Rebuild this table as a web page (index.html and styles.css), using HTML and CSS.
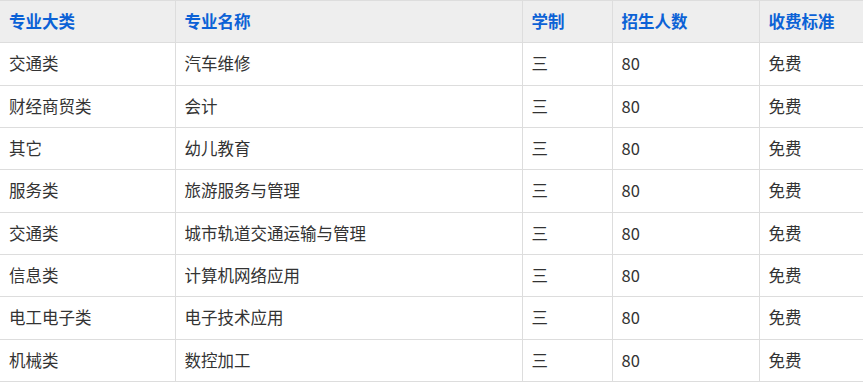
FILE: index.html
```html
<!DOCTYPE html>
<html lang="zh">
<head>
<meta charset="utf-8">
<link rel="stylesheet" href="styles.css">
</head>
<body>
<table class="major-table">
  <colgroup>
    <col class="c1"><col class="c2"><col class="c3"><col class="c4"><col class="c5">
  </colgroup>
  <thead>
    <tr><th>专业大类</th><th>专业名称</th><th>学制</th><th>招生人数</th><th>收费标准</th></tr>
  </thead>
  <tbody>
    <tr><td>交通类</td><td>汽车维修</td><td>三</td><td>80</td><td>免费</td></tr>
    <tr><td>财经商贸类</td><td>会计</td><td>三</td><td>80</td><td>免费</td></tr>
    <tr><td>其它</td><td>幼儿教育</td><td>三</td><td>80</td><td>免费</td></tr>
    <tr><td>服务类</td><td>旅游服务与管理</td><td>三</td><td>80</td><td>免费</td></tr>
    <tr><td>交通类</td><td>城市轨道交通运输与管理</td><td>三</td><td>80</td><td>免费</td></tr>
    <tr><td>信息类</td><td>计算机网络应用</td><td>三</td><td>80</td><td>免费</td></tr>
    <tr><td>电工电子类</td><td>电子技术应用</td><td>三</td><td>80</td><td>免费</td></tr>
    <tr><td>机械类</td><td>数控加工</td><td>三</td><td>80</td><td>免费</td></tr>
  </tbody>
</table>
</body>
</html>
```
FILE: styles.css
```css
html, body {
  margin: 0;
  padding: 0;
  background: #ffffff;
}
body {
  font-family: "Noto Sans CJK SC", "Noto Sans", sans-serif;
  font-size: 16.5px;
  color: #333333;
}
.major-table {
  border-collapse: collapse;
  table-layout: fixed;
  width: 863px;
}
.c1 { width: 175px; }
.c2 { width: 347px; }
.c3 { width: 90px; }
.c4 { width: 147px; }
.c5 { width: 104px; }
.major-table th,
.major-table td {
  border: 1px solid #dddddd;
  padding: 10px 9px;
  line-height: 21.33px;
  text-align: left;
  white-space: nowrap;
  overflow: hidden;
}
.major-table th:first-child,
.major-table td:first-child {
  border-left: none;
}
.major-table th {
  background: #eeeeee;
  color: #0c62d6;
  font-weight: bold;
}
```
